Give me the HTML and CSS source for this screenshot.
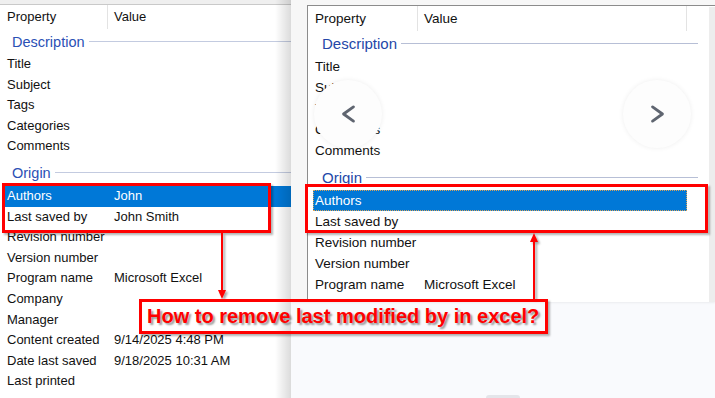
FILE: index.html
```html
<!DOCTYPE html>
<html>
<head>
<meta charset="utf-8">
<link rel="stylesheet" href="styles.css">
</head>
<body>
<div class="page">
  <section class="left">
    <div class="topband"></div>
    <div class="hdr"><span class="h1">Property</span><span class="h2">Value</span></div>
    <div class="group"><span>Description</span></div>
    <div class="row"><span class="k">Title</span><span class="v"></span></div>
    <div class="row"><span class="k">Subject</span><span class="v"></span></div>
    <div class="row"><span class="k">Tags</span><span class="v"></span></div>
    <div class="row"><span class="k">Categories</span><span class="v"></span></div>
    <div class="row"><span class="k">Comments</span><span class="v"></span></div>
    <div class="group group2"><span>Origin</span></div>
    <div class="row sel"><span class="k">Authors</span><span class="v">John</span></div>
    <div class="row"><span class="k">Last saved by</span><span class="v">John Smith</span></div>
    <div class="row"><span class="k">Revision number</span><span class="v"></span></div>
    <div class="row"><span class="k">Version number</span><span class="v"></span></div>
    <div class="row"><span class="k">Program name</span><span class="v">Microsoft Excel</span></div>
    <div class="row"><span class="k">Company</span><span class="v"></span></div>
    <div class="row"><span class="k">Manager</span><span class="v"></span></div>
    <div class="row"><span class="k">Content created</span><span class="v">9/14/2025 4:48 PM</span></div>
    <div class="row"><span class="k">Date last saved</span><span class="v">9/18/2025 10:31 AM</span></div>
    <div class="row"><span class="k">Last printed</span><span class="v"></span></div>
  </section>

  <section class="right">
    <div class="rtop">
      <div class="panel2">
        <div class="list2">
          <div class="hdr2"><span class="h1">Property</span><span class="h2">Value</span></div>
          <div class="group2r"><span>Description</span></div>
          <div class="row2"><span class="k">Title</span></div>
          <div class="row2"><span class="k">Subject</span></div>
          <div class="row2"><span class="k">Tags</span></div>
          <div class="row2"><span class="k">Categories</span></div>
          <div class="row2"><span class="k">Comments</span></div>
          <div class="group2r origin2"><span>Origin</span></div>
          <div class="row2 sel2"><span class="k">Authors</span></div>
          <div class="row2"><span class="k">Last saved by</span></div>
          <div class="row2"><span class="k">Revision number</span></div>
          <div class="row2"><span class="k">Version number</span></div>
          <div class="row2"><span class="k">Program name</span><span class="v">Microsoft Excel</span></div>
        </div>
        <div class="scroll"></div>
      </div>
    </div>
    <div class="rbottom"><div class="pill"></div></div>
  </section>

  <div class="nav nav-prev">
    <svg width="24" height="24" viewBox="0 0 24 24"><path d="M19 2 L5 12 L19 22" fill="none" stroke="#5f6570" stroke-width="4" stroke-linecap="round" stroke-linejoin="round"/></svg>
  </div>
  <div class="nav nav-next">
    <svg width="24" height="24" viewBox="0 0 24 24"><path d="M5 2 L19 12 L5 22" fill="none" stroke="#5f6570" stroke-width="4" stroke-linecap="round" stroke-linejoin="round"/></svg>
  </div>

  <div class="redbox box-left"></div>
  <div class="redbox box-right"></div>

  <svg class="arrows" width="715" height="398" viewBox="0 0 715 398">
    <defs>
      <filter id="sh" x="-50%" y="-50%" width="200%" height="200%">
        <feDropShadow dx="2" dy="2" stdDeviation="1" flood-color="#000" flood-opacity="0.35"/>
      </filter>
    </defs>
    <g filter="url(#sh)" fill="#ff0000" stroke="#ff0000">
      <line x1="222" y1="233" x2="222" y2="292" stroke-width="2"/>
      <polygon points="218,290 226,290 222,299" stroke="none"/>
      <line x1="534" y1="299" x2="534" y2="241" stroke-width="2"/>
      <polygon points="530,242 538,242 534,233" stroke="none"/>
    </g>
  </svg>

  <div class="callout">How to remove last modified by in excel?</div>
</div>
</body>
</html>
```

FILE: styles.css
```css
* { box-sizing: border-box; }
html, body { margin: 0; padding: 0; }
body {
  width: 715px;
  height: 398px;
  overflow: hidden;
  background: #f9fafd;
  font-family: "Liberation Sans", Arial, sans-serif;
  color: #111;
}
.page {
  position: relative;
  display: flex;
  width: 715px;
  height: 398px;
}

/* left properties panel */
.left {
  position: relative;
  width: 291px;
  flex: none;
  background: #fff;
  overflow: hidden;
  font-size: 13px;
}
.left::after {
  content: "";
  position: absolute;
  top: 0;
  right: 0;
  bottom: 0;
  width: 16px;
  background: linear-gradient(to right, rgba(0,0,0,0), rgba(0,0,0,0.14));
}
.topband {
  height: 5px;
  background: #efefef;
  border-bottom: 1px solid #c9c9c9;
}
.hdr {
  display: flex;
  height: 24px;
  line-height: 24px;
}
.hdr .h1 {
  width: 108px;
  padding-left: 7px;
  border-right: 1px solid #e3e3e3;
}
.hdr .h2 { padding-left: 6px; }

.group {
  display: flex;
  align-items: center;
  height: 25px;
  padding-left: 12px;
  font-size: 14.5px;
  color: #2b50b5;
}
.group::after {
  content: "";
  flex: 1;
  height: 1px;
  margin-left: 4px;
  background: #c3cbe0;
}
.group.group2 {
  height: 29px;
  padding-top: 3px;
}
.row {
  display: flex;
  height: 20.6px;
  line-height: 20.6px;
  margin-left: 5px;
  white-space: nowrap;
}
.row .k {
  width: 109px;
  flex: none;
  padding-left: 2px;
}
.row.sel {
  background: #0078d7;
  color: #fff;
}

/* right side screenshot */
.right {
  flex: 1;
  display: flex;
  flex-direction: column;
}
.rtop {
  height: 302px;
  background: #f7f7f7;
  padding: 5px 0 0 16px;
  display: flex;
  box-shadow: 0 1px 2px rgba(0,0,0,0.06);
}
.panel2 {
  flex: 1;
  display: flex;
  background: #fff;
  border-top: 1px solid #8c8c8c;
  border-left: 1px solid #8c8c8c;
  overflow: hidden;
  font-size: 13.5px;
}
.list2 { flex: 1; }
.scroll {
  width: 6px;
  margin-top: 1px;
  background: #ededed;
}
.hdr2 {
  display: flex;
  height: 25px;
  line-height: 25px;
}
.hdr2 .h1 {
  width: 110px;
  padding-left: 7px;
  border-right: 1px solid #e3e3e3;
}
.hdr2 .h2 {
  width: 269px;
  padding-left: 6px;
  border-right: 1px solid #e3e3e3;
}
.group2r {
  display: flex;
  align-items: center;
  height: 25px;
  padding: 0 11px 0 14px;
  font-size: 15px;
  color: #2447a8;
}
.group2r::after {
  content: "";
  flex: 1;
  height: 1px;
  margin-left: 4px;
  background: #b7bfd6;
}
.group2r.origin2 {
  height: 29px;
  padding-top: 3px;
}
.row2 {
  display: flex;
  height: 21px;
  line-height: 21px;
  margin: 0 22px 0 5px;
  white-space: nowrap;
}
.row2 .k {
  width: 111px;
  flex: none;
  padding-left: 2px;
}
.row2.sel2 {
  background: #0078d7;
  color: #fff;
  outline: 1px dotted #d9a35a;
  outline-offset: -1px;
}
.rbottom {
  flex: 1;
  display: flex;
  align-items: flex-end;
  padding-left: 195px;
}
.pill {
  width: 34px;
  height: 3px;
  border-radius: 4px 4px 0 0;
  background: #e4e5ea;
}

/* overlays */
.nav {
  position: absolute;
  top: 80px;
  width: 68px;
  height: 68px;
  border-radius: 50%;
  background: #fdfdfd;
  box-shadow: 0 0 5px rgba(0,0,0,0.07);
  display: flex;
  align-items: center;
  justify-content: center;
}
.nav svg { width: 17px; height: 22px; }
.nav-prev { left: 314px; }
.nav-next { left: 623px; }

.redbox {
  position: absolute;
  border: 3px solid #ff0000;
  box-shadow: 2px 2px 2px rgba(0,0,0,0.3);
}
.box-left { left: 2px; top: 183px; width: 269px; height: 50px; }
.box-right { left: 305px; top: 184px; width: 403px; height: 49px; }

.arrows {
  position: absolute;
  left: 0;
  top: 0;
  pointer-events: none;
}
.callout {
  position: absolute;
  left: 139px;
  top: 299px;
  width: 409px;
  height: 35px;
  border: 3px solid #ff0000;
  box-shadow: 2px 2px 2px rgba(0,0,0,0.3);
  font-weight: bold;
  font-size: 20px;
  line-height: 29px;
  padding-left: 5px;
  color: #ff0000;
  white-space: nowrap;
  text-shadow: 2px 2px 2px rgba(0,0,0,0.4);
}
```
